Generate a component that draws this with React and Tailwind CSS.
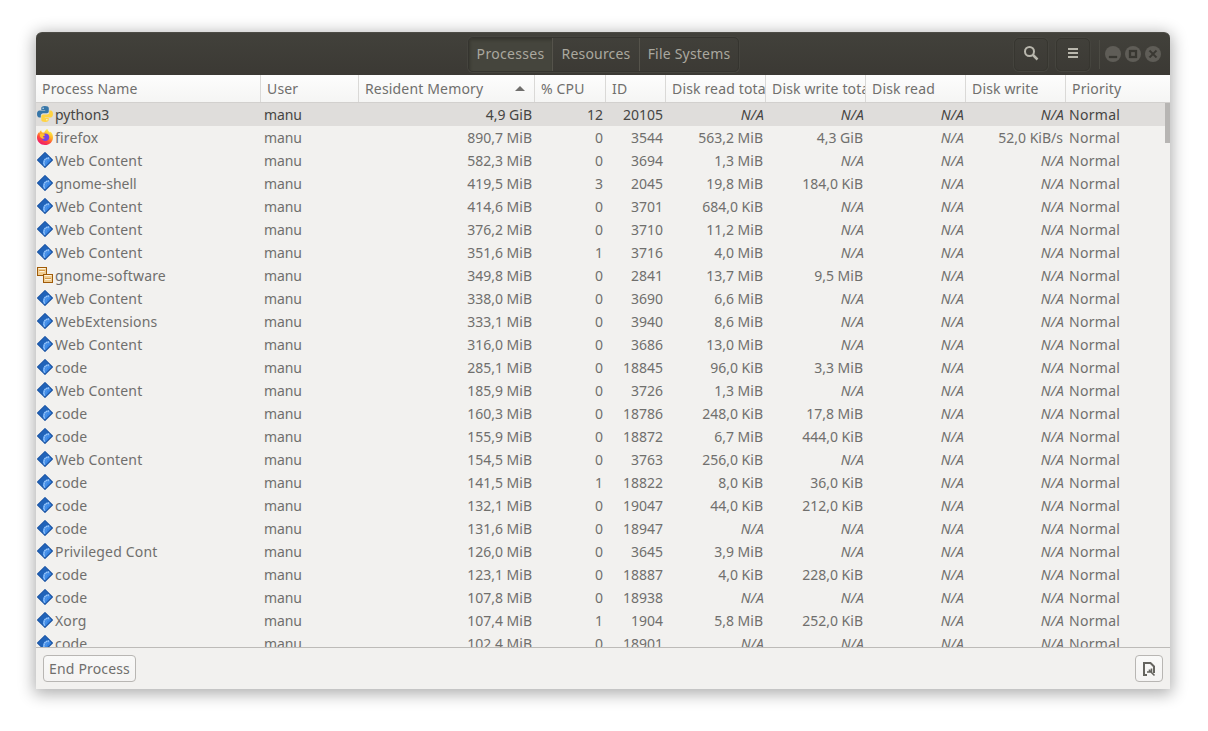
import React from "react";

const COLUMNS = [
  { label: "Process Name", width: "w-[225px]" },
  { label: "User", width: "w-[98px]" },
  { label: "Resident Memory", width: "w-[176px]", sorted: true },
  { label: "% CPU", width: "w-[71px]" },
  { label: "ID", width: "w-[60px]" },
  { label: "Disk read total", width: "w-[100px]" },
  { label: "Disk write total", width: "w-[100px]" },
  { label: "Disk read", width: "w-[100px]" },
  { label: "Disk write", width: "w-[100px]" },
  { label: "Priority", width: "w-[104px]" },
];

const NA = "N/A";

const PROCESSES = [
  ["python3", "4,9 GiB", 12, 20105, NA, NA, NA, NA],
  ["firefox", "890,7 MiB", 0, 3544, "563,2 MiB", "4,3 GiB", NA, "52,0 KiB/s"],
  ["Web Content", "582,3 MiB", 0, 3694, "1,3 MiB", NA, NA, NA],
  ["gnome-shell", "419,5 MiB", 3, 2045, "19,8 MiB", "184,0 KiB", NA, NA],
  ["Web Content", "414,6 MiB", 0, 3701, "684,0 KiB", NA, NA, NA],
  ["Web Content", "376,2 MiB", 0, 3710, "11,2 MiB", NA, NA, NA],
  ["Web Content", "351,6 MiB", 1, 3716, "4,0 MiB", NA, NA, NA],
  ["gnome-software", "349,8 MiB", 0, 2841, "13,7 MiB", "9,5 MiB", NA, NA],
  ["Web Content", "338,0 MiB", 0, 3690, "6,6 MiB", NA, NA, NA],
  ["WebExtensions", "333,1 MiB", 0, 3940, "8,6 MiB", NA, NA, NA],
  ["Web Content", "316,0 MiB", 0, 3686, "13,0 MiB", NA, NA, NA],
  ["code", "285,1 MiB", 0, 18845, "96,0 KiB", "3,3 MiB", NA, NA],
  ["Web Content", "185,9 MiB", 0, 3726, "1,3 MiB", NA, NA, NA],
  ["code", "160,3 MiB", 0, 18786, "248,0 KiB", "17,8 MiB", NA, NA],
  ["code", "155,9 MiB", 0, 18872, "6,7 MiB", "444,0 KiB", NA, NA],
  ["Web Content", "154,5 MiB", 0, 3763, "256,0 KiB", NA, NA, NA],
  ["code", "141,5 MiB", 1, 18822, "8,0 KiB", "36,0 KiB", NA, NA],
  ["code", "132,1 MiB", 0, 19047, "44,0 KiB", "212,0 KiB", NA, NA],
  ["code", "131,6 MiB", 0, 18947, NA, NA, NA, NA],
  ["Privileged Cont", "126,0 MiB", 0, 3645, "3,9 MiB", NA, NA, NA],
  ["code", "123,1 MiB", 0, 18887, "4,0 KiB", "228,0 KiB", NA, NA],
  ["code", "107,8 MiB", 0, 18938, NA, NA, NA, NA],
  ["Xorg", "107,4 MiB", 1, 1904, "5,8 MiB", "252,0 KiB", NA, NA],
  ["code", "102,4 MiB", 0, 18901, NA, NA, NA, NA],
];

function PythonIcon() {
  return (
    <svg className="size-4 shrink-0" viewBox="0 0 16 16">
      <path fill="#3776a8" d="M7.8 0C5 0 4.300 1 4.300 2.200V4H8.200V4.600H2.500C1 4.600 0 5.900 0 8s.9 3.500 2.300 3.500h1.500V9.600c0-1.300 1-2.300 2.300-2.300h3.700c1.100 0 2-.9 2-2V2.200C11.800.8 10.400 0 7.800 0Z" />
      <path fill="#ffd343" d="M8.200 16c2.800 0 3.500-1 3.500-2.200V12H7.800v-.6h5.700C15 11.400 16 10.100 16 8s-.9-3.500-2.300-3.500h-1.400v1.800c0 1.300-1 2.300-2.300 2.300H6.300c-1.100 0-2 .9-2 2v3.200c0 1.400 1.300 2.200 3.900 2.200Z" />
      <circle cx="6.100" cy="2.200" r=".75" fill="#dfeaf3" />
      <circle cx="9.900" cy="13.800" r=".75" fill="#fff6d2" />
    </svg>
  );
}

function FirefoxIcon() {
  return (
    <svg className="size-4 shrink-0" viewBox="0 0 16 16">
      <defs>
        <linearGradient id="ff" x1=".8" y1=".1" x2=".3" y2="1">
          <stop offset="0" stopColor="#fff04a" />
          <stop offset=".35" stopColor="#ffb028" />
          <stop offset=".65" stopColor="#ff4a3c" />
          <stop offset="1" stopColor="#ec1470" />
        </linearGradient>
      </defs>
      <path fill="url(#ff)" d="M10.400 0c.3 1.700 1.500 2.300 2.600 3.400.3-.1.400-.5.400-.9C15 4 16 6 16 8.400 16 12.700 12.500 16 8 16S0 12.800 0 8.500C0 6.200.8 4.500 1.900 3.200c0 .5.100.8.300 1.100C2.500 3.100 3.200 2 4.200 1.300c0 1.200.6 1.800 1.300 2.200h1.800C7.700 2 9 .6 10.400 0Z" />
      <path fill="#7542e5" d="M8.300 4.400c2.500 0 4 1.700 4 3.800 0 2.300-1.700 3.900-4 3.900-2.200 0-3.700-1.500-3.700-3.300 1.200 1 2.600.6 3.500-.1-1.600 0-2.200-.7-2-1.500l2-.9c-.2-.9-.8-1.300-1.600-1.400.5-.3 1.100-.5 1.800-.5Z" />
      <path fill="#ffbd2e" d="M3 4.900c1.300-.6 2.800-.6 3.700.5l1.300.8-1.900 1c-.5 1 .2 1.700 1.700 1.700-.8 1-2.500 1.100-3.500.2C2.900 8 2.600 6.300 3 4.900Z" />
    </svg>
  );
}

function DiamondIcon() {
  return (
    <svg className="size-4 shrink-0" viewBox="0 0 16 16">
      <path d="M8 .6 15.400 8 8 15.400.6 8Z" fill="#3584e4" stroke="#17509f" strokeWidth="1.100" strokeLinejoin="round" />
      <path d="M8 1.300 1.300 8 6 12.700C5.500 9.500 6.800 7 10.900 5.300L11.400 4.700Z" fill="#2063b9" />
      <path d="M12.200 6.100C8.600 6 6.600 8 7 11.600L7.600 13.600" fill="none" stroke="#9cc8fa" strokeWidth="1.500" strokeDasharray="1.500 .4" />
      <path d="M12.300 7.700C10 7.600 8.700 9 8.900 11.600" fill="none" stroke="#62a0ea" strokeWidth=".8" />
    </svg>
  );
}

function PackagesIcon() {
  return (
    <svg className="size-4 shrink-0" viewBox="0 0 16 16">
      <rect x=".5" y=".5" width="9" height="8" fill="#f0cd92" stroke="#a05b08" />
      <path d="M1.500 1.500h7M2.500 4.500h5" stroke="#fff4dc" />
      <path d="M2 3.500h6" stroke="#d69b4b" />
      <rect x="6.500" y="7.500" width="9" height="8" fill="#f0cd92" stroke="#a05b08" />
      <path d="M7.500 8.500h7M8 12.500h6" stroke="#fff4dc" />
      <path d="M8 11.500h6" stroke="#d69b4b" />
    </svg>
  );
}

function ProcessIcon({ name }) {
  if (name === "python3") return <PythonIcon />;
  if (name === "firefox") return <FirefoxIcon />;
  if (name === "gnome-software") return <PackagesIcon />;
  return <DiamondIcon />;
}

function Value({ value, width }) {
  return (
    <div className={`${width} shrink-0 text-right ${value === NA ? "pr-[2px] italic tracking-[0.2px]" : "pr-[3px]"}`}>
      {value}
    </div>
  );
}

function ProcessRow({ process, selected }) {
  const [name, memory, cpu, id, readTotal, writeTotal, read, write] = process;
  return (
    <div className={`flex h-[23px] shrink-0 leading-[23px] ${selected ? "bg-[#dfdddb] text-[#464543]" : ""}`}>
      <div className="flex w-[225px] shrink-0 gap-[2px] pl-px">
        <div className="pt-[3px]">
          <ProcessIcon name={name} />
        </div>
        <span className={name === "python3" || name === "gnome-shell" ? "" : "tracking-[0.17px]"}>{name}</span>
      </div>
      <div className="w-[98px] shrink-0 pl-[3px] tracking-[-0.1px]">manu</div>
      <Value width="w-[176px]" value={memory} />
      <Value width="w-[71px]" value={cpu} />
      <Value width="w-[60px]" value={id} />
      <Value width="w-[100px]" value={readTotal} />
      <Value width="w-[100px]" value={writeTotal} />
      <Value width="w-[100px]" value={read} />
      <Value width="w-[100px]" value={write} />
      <div className="pl-[3px] tracking-[0.3px]">Normal</div>
    </div>
  );
}

function TitleBar() {
  return (
    <header className="flex h-[43px] shrink-0 items-center rounded-t-[6px] border-t border-[#4d4c46] bg-linear-to-b from-[#42413b] to-[#3b3934] text-[#aaa89f]">
      <div className="w-[432px] shrink-0" />
      <nav className="flex h-[35px] shrink-0 overflow-hidden rounded-[5px] border border-[#35342f] text-center leading-[32px] shadow-[0_0_0_1px_#45443e]">
        <div className="w-[84px] border-r border-[#55534b] bg-[#45453d] tracking-[0.3px] shadow-[inset_1px_2px_3px_#37362f]">Processes</div>
        <div className="w-[87px] border-r border-[#55534b] tracking-[0.2px]">Resources</div>
        <div className="w-[98px] tracking-[0.2px]">File Systems</div>
      </nav>
      <div className="flex flex-1 items-center justify-end pr-[9px]">
        <button className="flex h-[33px] w-[34px] items-center justify-center rounded-[5px] border border-[#373630] pb-[2px] shadow-[0_0_0_1px_#45443e]">
          <svg className="size-4" viewBox="0 0 16 16" fill="none" stroke="#b9b7ad" strokeWidth="2">
            <circle cx="6.500" cy="6.500" r="4.500" />
            <path d="m10 10 4.500 4.500" strokeWidth="2.500" />
          </svg>
        </button>
        <button className="ml-2 flex h-[33px] w-[34px] items-center justify-center rounded-[5px] border border-[#373630] pb-[2px] shadow-[0_0_0_1px_#45443e]">
          <svg className="size-4" viewBox="0 0 16 16" fill="#b9b7ad">
            <path d="M3 3h10v2H3zM3 7h10v2H3zM3 11h10v2H3z" />
          </svg>
        </button>
        <div className="ml-[9px] h-[29px] w-px bg-[#4b4a43]" />
        <div className="ml-[5px] flex gap-1 pb-px">
          {["M4 10h8v2H4z", "M4 4h8v8H4zM6 6v4h4V6z", "m4 5.200 1.200-1.200L8 6.800 10.800 4 12 5.200 9.200 8 12 10.800 10.800 12 8 9.200 5.200 12 4 10.800 6.800 8Z"].map((d) => (
            <svg key={d} className="size-4 rounded-full bg-[#5f5d57]" viewBox="0 0 16 16">
              <path d={d} fill="#393832" stroke="#393832" strokeWidth=".3" fillRule="evenodd" />
            </svg>
          ))}
        </div>
      </div>
    </header>
  );
}

export default function App() {
  return (
    <div className="h-[731px] w-[1208px] overflow-hidden bg-white px-[36px] pt-[32px] [font-family:'Noto_Sans',sans-serif] text-[14px] text-[#706f6d]">
      <div className="flex h-[657px] w-[1134px] flex-col rounded-t-[6px] bg-[#f2f1ef] shadow-[0_3px_16px_2px_rgba(0,0,0,0.32)]">
        <TitleBar />
        <div className="flex h-[28px] shrink-0 border-b border-[#d2d0ce] bg-linear-to-b from-[#fdfdfd] to-[#f5f5f4] leading-[27px] tracking-[0.16px]">
          {COLUMNS.map((c, i) => (
            <div
              key={c.label}
              className={`${c.width} flex shrink-0 items-center overflow-hidden whitespace-nowrap pl-[6px] ${i < 9 ? "border-r border-[#dad9d7]" : ""}`}
            >
              <span>{c.label}</span>
              {c.sorted && (
                <svg className="mr-[9px] ml-auto h-[5px] w-[10px]" viewBox="0 0 10 5" fill="#706f6d">
                  <path d="M0 5 5 0l5 5Z" />
                </svg>
              )}
            </div>
          ))}
        </div>
        <div className="flex h-[544px] shrink-0 overflow-hidden">
          <main className="relative flex w-full flex-col whitespace-nowrap">
            {PROCESSES.map((p, i) => (
              <ProcessRow key={p[3]} process={p} selected={i === 0} />
            ))}
            <div className="absolute top-0 right-0 h-[40px] w-[5px] bg-[#b7b5b3]" />
          </main>
        </div>
        <footer className="flex flex-1 items-center justify-between border-t border-[#bdbbb8] px-[7px]">
          <button className="h-[27px] w-[93px] rounded-[4px] border border-[#b8b6b3] bg-linear-to-b from-[#f9f9f8] to-[#f4f3f2] leading-[25px] tracking-[0.15px]">End Process</button>
          <button className="flex h-[27px] w-[28px] items-center justify-center rounded-[4px] border border-[#b8b6b3] bg-linear-to-b from-[#f9f9f8] to-[#f4f3f2]">
            <svg className="size-4" viewBox="0 0 16 16" fill="none" stroke="#65645f" strokeWidth="2">
              <path d="M6 14H3V2h6.500L13 5.500V12" />
              <path d="M8.500 8.500v3M6 11h4.500V7.500M9 10l4.500 4.500" strokeWidth="1.600" />
            </svg>
          </button>
        </footer>
      </div>
    </div>
  );
}
